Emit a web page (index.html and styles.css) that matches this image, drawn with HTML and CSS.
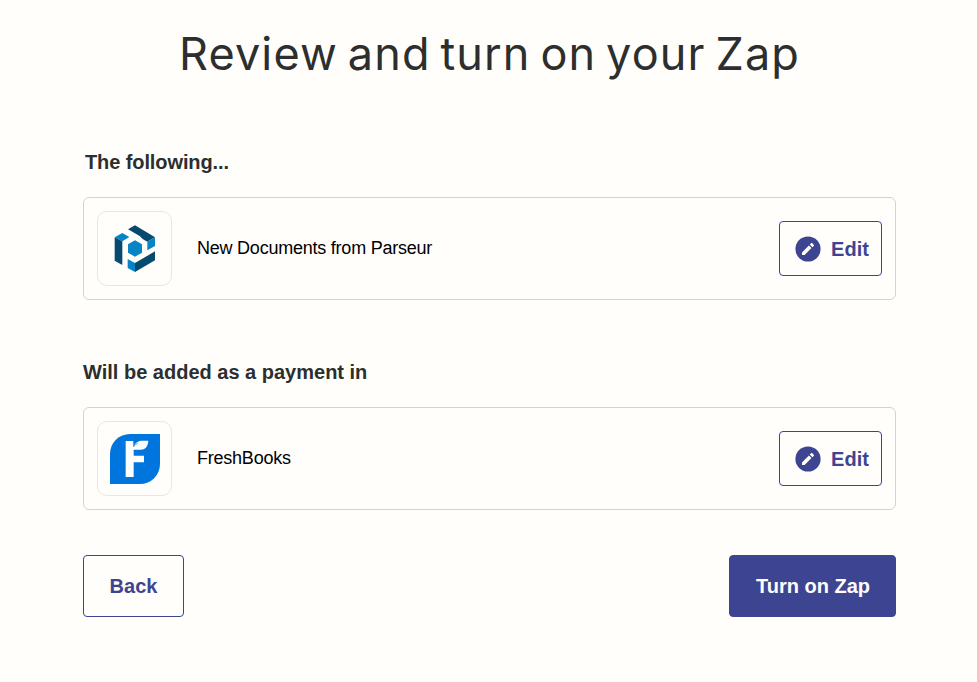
FILE: index.html
```html
<!DOCTYPE html>
<html lang="en">
<head>
  <meta charset="UTF-8" />
  <title>Review and turn on your Zap</title>
  <meta name="viewport" content="width=device-width, initial-scale=1.0"/>
  <link rel="stylesheet" href="styles.css">
</head>
<body>

<main class="container">
  <h1>Review and turn on your Zap</h1>

  <section class="step">
    <h2 class="first">The following...</h2>
    <div class="card">
      <div class="app-icon">
        <svg width="50" height="50" viewBox="60 57 150 150">
          <path fill="#064a70" d="M135 61 195 97 172 110 158 102 149 93 114 73Z"/>
          <path fill="#0684c6" d="M195 97V123L172 136V110Z"/>
          <path fill="#0684c6" d="M74 97 97 84 118 96 97 109Z"/>
          <path fill="#064a70" d="M74 97 97 109V180L74 167Z"/>
          <path fill="#0684c6" d="M113 162 135 174V201L113 189Z"/>
          <path fill="#064a70" d="M135 174 195 139V166L135 201Z"/>
          <path fill="#0684c6" d="M135 106 156 118V143L135 155 114 143V118Z"/>
        </svg>
      </div>
      <span class="name">New Documents from Parseur</span>
      <button type="button" class="btn edit">
        <svg width="26" height="26" viewBox="0 0 26 26">
          <circle cx="13" cy="13" r="12.6" fill="#3d4592"/>
          <path fill="#fffefb" d="M7 19V16.4L13.9 9.5 16.5 12.1 9.6 19ZM14.8 8.6 16.3 7.1Q16.7 6.8 17.1 7.1L18.9 8.9Q19.2 9.3 18.9 9.7L17.4 11.2Z"/>
        </svg>
        <span>Edit</span>
      </button>
    </div>
  </section>

  <section class="step">
    <h2>Will be added as a payment in</h2>
    <div class="card">
      <div class="app-icon">
        <svg width="50" height="50" viewBox="0 0 150 150">
          <path fill="#0075dd" d="M60 0H150V90A60 60 0 0 1 90 150H0V60A60 60 0 0 1 60 0Z"/>
          <path fill="#fff" d="M47 21H71V38C75 25 86 20 98 20H115C114 37 106 47 91 47H71V65H102V85H71V129H47Z"/>
          <path fill="none" stroke="#0075dd" stroke-width="2" d="M71 21V38C74 33 78 30 83 29"/>
        </svg>
      </div>
      <span class="name">FreshBooks</span>
      <button type="button" class="btn edit">
        <svg width="26" height="26" viewBox="0 0 26 26">
          <circle cx="13" cy="13" r="12.6" fill="#3d4592"/>
          <path fill="#fffefb" d="M7 19V16.4L13.9 9.5 16.5 12.1 9.6 19ZM14.8 8.6 16.3 7.1Q16.7 6.8 17.1 7.1L18.9 8.9Q19.2 9.3 18.9 9.7L17.4 11.2Z"/>
        </svg>
        <span>Edit</span>
      </button>
    </div>
  </section>

  <div class="actions">
    <button type="button" class="btn back">Back</button>
    <button type="button" class="btn primary">Turn on Zap</button>
  </div>
</main>

</body>
</html>
```
FILE: styles.css
```css
* { box-sizing: border-box; }

body {
  margin: 0;
  font-family: "Liberation Sans", Arial, sans-serif;
  background: #fffefb;
  color: #2d2e2e;
}

.container {
  width: 813px;
  margin: 0 0 0 83px;
  padding-top: 24px;
}

h1 {
  margin: 0 0 65px;
  font-family: Inter, sans-serif;
  font-size: 45px;
  font-weight: 400;
  line-height: 60px;
  letter-spacing: 1.15px;
  word-spacing: -4px;
  text-align: center;
  white-space: nowrap;
}

.step {
  margin-bottom: 59px;
}

h2 {
  margin: 0 0 21px;
  font-size: 20px;
  font-weight: bold;
  line-height: 27px;
}

h2.first {
  padding-left: 2px;
  letter-spacing: -0.1px;
}

.card {
  display: flex;
  align-items: center;
  height: 103px;
  padding: 0 13px;
  border: 1px solid #d3d3d1;
  border-radius: 6px;
}

.app-icon {
  display: flex;
  align-items: center;
  justify-content: center;
  width: 75px;
  height: 75px;
  border: 1px solid #e8e7e4;
  border-radius: 10px;
}

.name {
  flex: 1;
  margin-left: 25px;
  padding-bottom: 2px;
  font-size: 18px;
  line-height: 24px;
  letter-spacing: -0.23px;
  color: #000;
}

.btn {
  display: flex;
  align-items: center;
  justify-content: center;
  padding: 0;
  border: 1px solid #3d4592;
  border-radius: 4px;
  background: #fffefb;
  color: #3d4592;
  font-family: inherit;
  font-size: 20px;
  font-weight: bold;
  cursor: pointer;
}

.edit {
  gap: 10px;
  width: 103px;
  height: 55px;
  padding-left: 3px;
}

.edit span {
  padding-top: 1px;
}

.actions {
  display: flex;
  justify-content: space-between;
  margin-top: -14px;
}

.back {
  width: 101px;
  height: 62px;
}

.primary {
  width: 167px;
  height: 62px;
  padding-left: 1px;
  background: #3d4592;
  color: #fffefb;
}
```
